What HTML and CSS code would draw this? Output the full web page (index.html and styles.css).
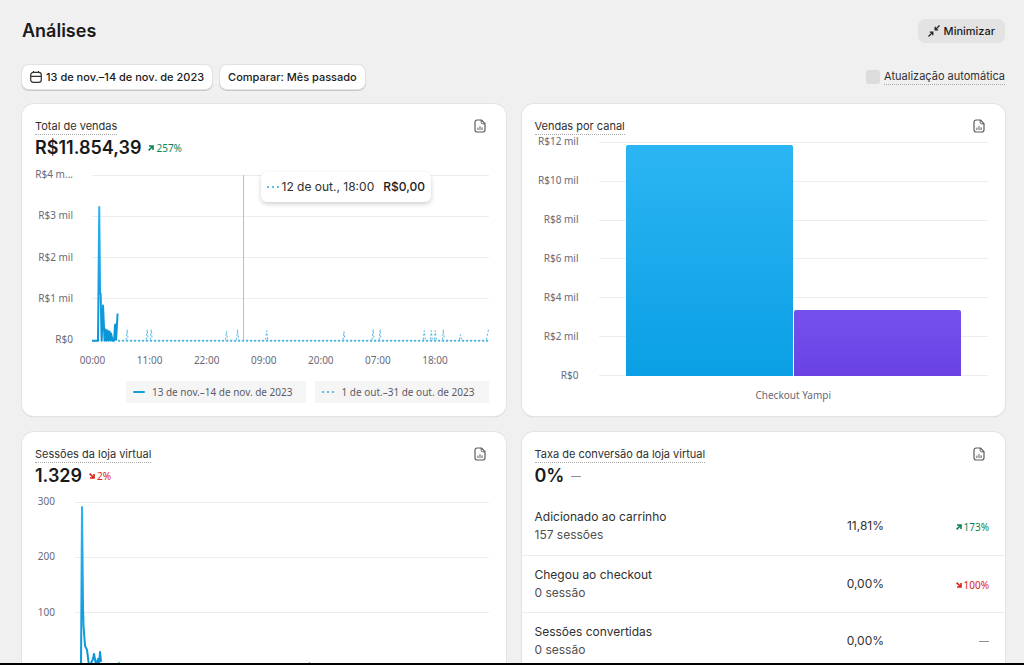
FILE: index.html
```html
<!DOCTYPE html>
<html lang="pt-BR">
<head>
<meta charset="utf-8">
<meta name="viewport" content="width=device-width, initial-scale=1">
<title>Análises</title>
<link rel="stylesheet" href="styles.css">
</head>
<body>
<svg class="defs" aria-hidden="true">
  <defs>
    <linearGradient id="line-blue" x1="0" y1="0" x2="0" y2="1">
      <stop offset="0" stop-color="#2cb3f2"/><stop offset="1" stop-color="#0894d6"/>
    </linearGradient>
    <symbol id="report" viewBox="0 0 12 14">
      <path d="M7.4 1H3.2Q1 1 1 3.2V10.8Q1 13 3.2 13H8.8Q11 13 11 10.8V4.6Z" fill="none" stroke="#5c5c5c" stroke-width="1.2" stroke-linejoin="round"/>
      <path d="M7.2 1V3.4Q7.2 4.8 8.6 4.8H11M3.9 8.6V11M6 7.2V11M8.1 8.4V11" fill="none" stroke="#5c5c5c" stroke-width="1"/>
    </symbol>
    <symbol id="up" viewBox="0 0 6 6">
      <path d="M.6 5.4 4.8 1.2M1 1H5V5" fill="none" stroke="currentColor" stroke-width="1.6"/>
    </symbol>
    <symbol id="down" viewBox="0 0 6 6">
      <path d="M.6.6 4.8 4.8M1 5H5V1" fill="none" stroke="currentColor" stroke-width="1.6"/>
    </symbol>
  </defs>
</svg>
<main class="page">
  <header class="topbar">
    <h1>Análises</h1>
    <button type="button" class="minimize">
      <svg class="icon-min" viewBox="0 0 12 12" aria-hidden="true"><path d="M11.5.5 7.6 4.4M7.2 1.8V4.8H10.2M.5 11.5 4.4 7.6M1.8 7.2H4.8V10.2" fill="none" stroke="#222" stroke-width="1.3"/></svg>
      Minimizar
    </button>
  </header>
  <div class="filters">
    <button type="button" class="filter">
      <svg class="icon-cal" viewBox="0 0 12 12" aria-hidden="true"><rect x=".7" y="1.3" width="10.6" height="10" rx="2.6" fill="none" stroke="#303030" stroke-width="1.2"/><path d="M.7 5.4H11.3M3.5 0V1.8M8.5 0V1.8" stroke="#303030" stroke-width="1.2"/></svg>
      13 de nov.–14 de nov. de 2023
    </button>
    <button type="button" class="filter">Comparar: Mês passado</button>
    <label class="auto"><input type="checkbox"><span class="hint">Atualização automática</span></label>
  </div>

  <div class="cards">
    <section class="card">
      <div class="card-head">
        <h2 class="hint">Total de vendas</h2>
        <button type="button" class="report" aria-label="Ver relatório"><svg viewBox="0 0 12 14"><use href="#report"/></svg></button>
      </div>
      <p class="metric">R$11.854,39 <span class="trend good"><svg><use href="#up"/></svg>257%</span></p>
      <div class="chart sales">
        <div class="ylabels"><span>R$4 m...</span><span>R$3 mil</span><span>R$2 mil</span><span>R$1 mil</span><span>R$0</span></div>
        <div class="plot">
          <div class="grid"><i></i><i></i><i></i><i></i><i></i></div>
          <svg class="lines" viewBox="0 0 395 165" preserveAspectRatio="none" role="img" aria-label="Total de vendas ao longo do tempo">
            <path class="dotted base" d="M26 165H395"/>
            <path class="dotted" d="M34 164l1-10 1 10M54 164l1-10 1 10M58 164l1-10 1 10M133 164l1-8 1 8M144 164l1-10 1 10M173 164l1-9 1 9M250 164l1-8 1 8M279 164l1-10 1 10M286 164l1-10 1 10M330 164l1-9 1 9M337 164l1-9 1 9M341 164l1-9 1 9M349 164l1-10 1 10M366 164l1-5 1 5M393 164l2-10"/>
            <path class="solid" d="M0 165H6L7.2 32 8 118 8.600 118 9.600 165 11 130 12.500 165 13.500 154 14.500 165 15.500 155 16.500 165 17.500 156 18.500 165 19 158 20.500 165 22 165 23 149 24 164 25.500 138"/>
          </svg>
          <div class="cursor"></div>
          <div class="tooltip"><span class="dots"></span><span>12 de out., 18:00</span><strong>R$0,00</strong></div>
        </div>
        <div class="xlabels"><span>00:00</span><span>11:00</span><span>22:00</span><span>09:00</span><span>20:00</span><span>07:00</span><span>18:00</span></div>
      </div>
      <div class="legend">
        <span class="key"><span class="dash"></span>13 de nov.–14 de nov. de 2023</span>
        <span class="key"><span class="dots"></span>1 de out.–31 de out. de 2023</span>
      </div>
    </section>

    <section class="card">
      <div class="card-head">
        <h2 class="hint">Vendas por canal</h2>
        <button type="button" class="report" aria-label="Ver relatório"><svg viewBox="0 0 12 14"><use href="#report"/></svg></button>
      </div>
      <div class="chart channels">
        <div class="ylabels"><span>R$12 mil</span><span>R$10 mil</span><span>R$8 mil</span><span>R$6 mil</span><span>R$4 mil</span><span>R$2 mil</span><span>R$0</span></div>
        <div class="plot">
          <div class="grid"><i></i><i></i><i></i><i></i><i></i><i></i><i></i></div>
          <div class="bars"><div class="bar blue" style="height:98.7%"></div><div class="bar purple" style="height:28%"></div></div>
        </div>
        <div class="category">Checkout Yampi</div>
      </div>
    </section>

    <section class="card">
      <div class="card-head">
        <h2 class="hint">Sessões da loja virtual</h2>
        <button type="button" class="report" aria-label="Ver relatório"><svg viewBox="0 0 12 14"><use href="#report"/></svg></button>
      </div>
      <p class="metric">1.329 <span class="trend bad"><svg><use href="#down"/></svg>2%</span></p>
      <div class="chart sessions">
        <div class="ylabels"><span>300</span><span>200</span><span>100</span><span>0</span></div>
        <div class="plot">
          <div class="grid"><i></i><i></i><i></i><i></i></div>
          <svg class="lines" viewBox="0 0 413 165" preserveAspectRatio="none" role="img" aria-label="Sessões ao longo do tempo">
            <path class="dotted" d="M27 165l8 0 1-5 2 5h5l1-7 1 7H233l1-6 1 6h13l1-5 1 5H413"/>
            <path class="solid" d="M0 165H6L7 5 8 103 8.500 123 10 143 12 147 14 163 16 160 18 156 19 151 21 162 23 156 24 161 25 149 26 159"/>
          </svg>
        </div>
      </div>
    </section>

    <section class="card">
      <div class="card-head">
        <h2 class="hint">Taxa de conversão da loja virtual</h2>
        <button type="button" class="report" aria-label="Ver relatório"><svg viewBox="0 0 12 14"><use href="#report"/></svg></button>
      </div>
      <p class="metric">0% <span class="none"></span></p>
      <table class="funnel">
        <tr><th scope="row">Adicionado ao carrinho<small>157 sessões</small></th><td class="rate">11,81%</td><td class="change"><span class="trend good"><svg><use href="#up"/></svg>173%</span></td></tr>
        <tr><th scope="row">Chegou ao checkout<small>0 sessão</small></th><td class="rate">0,00%</td><td class="change"><span class="trend bad"><svg><use href="#down"/></svg>100%</span></td></tr>
        <tr><th scope="row">Sessões convertidas<small>0 sessão</small></th><td class="rate">0,00%</td><td class="change"><span class="none"></span></td></tr>
      </table>
    </section>
  </div>
</main>
</body>
</html>
```
FILE: styles.css
```css
* { box-sizing: border-box; }
body { margin: 0; background: #f0f0f0; color: #303030; font: 11px/16px Inter, "Liberation Sans", sans-serif; }
button { font: inherit; color: inherit; border: 0; padding: 0; background: none; }
h1, h2, p { margin: 0; }
.defs { position: absolute; width: 0; height: 0; }

.page { height: 100vh; overflow: hidden; padding: 19px 19px 0 22px; border-bottom: 2px solid #000; }
.topbar { display: flex; justify-content: space-between; align-items: center; height: 24px; }
h1 { font-size: 18px; line-height: 24px; font-weight: 600; color: #1a1a1a; }
.minimize { display: flex; align-items: center; gap: 4px; height: 24px; padding: 0 10px; border-radius: 7px; background: #e3e3e3; font-weight: 500; color: #1a1a1a; }
.icon-min, .icon-cal { width: 12px; height: 12px; }
.filters { display: flex; align-items: center; gap: 8px; margin: 22px 0 15px; }
.filter { display: flex; align-items: center; gap: 4px; height: 24px; padding: 0 8px; border-radius: 7px; background: #fff; font-weight: 500; color: #1a1a1a; box-shadow: 0 0 0 1px #e2e2e2, 0 1px 0 1px #c8c8c8; }
.auto { display: flex; align-items: center; gap: 4px; margin-left: auto; }
.auto input { appearance: none; width: 14px; height: 14px; margin: 0; border-radius: 3px; background: #dcdcdc; }
.hint { border-bottom: 1px dotted #aaa; font-size: 11px; line-height: 15px; font-weight: 400; }

.cards { display: grid; grid-template-columns: 1fr 1fr; gap: 16px; }
.card { min-height: 312px; padding: 15px 17px 0 13px; border-radius: 12px; background: #fff; box-shadow: 0 0 0 1px #e4e4e4, 0 1px 1px #bbb; }
.card-head { display: flex; justify-content: space-between; align-items: flex-start; height: 16px; }
.report { display: flex; margin-right: 3px; }
.report svg { width: 12px; height: 14px; }
.metric { display: flex; align-items: center; gap: 7px; height: 24px; margin-top: 1px; font-size: 18px; line-height: 24px; font-weight: 600; color: #1a1a1a; }
.trend { display: inline-flex; align-items: center; gap: 2px; font: 10px/14px "Noto Sans", sans-serif; }
.trend svg { width: 6px; height: 6px; }
.good { color: #0b8457; }
.bad { color: #dc2318; }
.none { display: inline-block; width: 10px; height: 1px; background: #8a9299; vertical-align: middle; }

.chart { display: grid; color: #6a6a78; font: 10px/14px "Noto Sans", sans-serif; }
.ylabels { display: flex; flex-direction: column; justify-content: space-between; margin: -8px 0 -6px; text-align: right; white-space: nowrap; }
.plot { position: relative; display: grid; }
.plot > * { grid-area: 1 / 1; }
.grid { display: flex; flex-direction: column; justify-content: space-between; }
.grid i { height: 1px; background: #ededed; }
.lines { width: 100%; height: 100%; overflow: visible; }
.lines path { fill: none; vector-effect: non-scaling-stroke; stroke-linejoin: round; }
.lines .solid { stroke: url(#line-blue); stroke-width: 2; }
.lines .dotted { stroke: #4db5e3; stroke-width: 1; stroke-dasharray: 2 2; }
.lines .base { stroke-width: 2; }

.sales { grid-template: 165px auto / 38px 1fr; column-gap: 19px; margin-top: 15px; }
.cursor { position: absolute; left: 38%; top: 0; width: 1px; height: 100%; background: #bdbdbd; }
.tooltip { position: absolute; left: 42.5%; top: -3px; display: flex; align-items: center; height: 30px; padding: 0 6px; border-radius: 6px; background: #fff; box-shadow: 0 2px 5px #00000030; color: #303030; font: 12px/16px Inter, sans-serif; white-space: nowrap; }
.tooltip strong { margin-left: 9px; font-weight: 500; color: #1a1a1a; }
.dots { width: 12px; height: 2px; background: repeating-linear-gradient(90deg, #62c0e9 0 2px, transparent 2px 5px); }
.tooltip .dots { margin-right: 3px; }
.dash { width: 12px; height: 2px; border-radius: 1px; background: #14a0df; }
.xlabels { grid-column: 2; display: grid; grid-template-columns: repeat(7, 1fr); margin: 13px 25px 0 -28px; text-align: center; }
.legend { display: flex; justify-content: flex-end; gap: 9px; margin-top: 14px; color: #5c5c68; font: 10px/22px "Noto Sans", sans-serif; }
.key { display: flex; align-items: center; gap: 7px; padding: 0 14px 0 7px; background: #f5f5f5; }

.channels { grid-template: 234px auto / 44px 1fr; column-gap: 20px; margin-top: 7px; }
.bars { display: flex; align-items: flex-end; gap: 1px; padding: 0 7%; }
.bar { flex: 1; border-radius: 2px 2px 0 0; }
.blue { background: linear-gradient(#2cb5f3, #0a9fe4); }
.purple { background: linear-gradient(#7650ed, #6a42e4); }
.category { grid-column: 2; margin-top: 12px; text-align: center; }

.sessions { grid-template: 166px / 20px 1fr; column-gap: 20px; margin-top: 14px; }

.funnel { width: calc(100% + 30px); margin: 10px -17px 0 -13px; border-collapse: collapse; }
.funnel tr { height: 57px; }
.funnel tr + tr { border-top: 1px solid #ebebeb; }
.funnel th { padding: 0 0 0 13px; text-align: left; font-weight: 400; font-size: 12px; line-height: 18px; }
.funnel small { display: block; font-size: 12px; color: #505050; }
.funnel td { padding: 0; text-align: right; }
.rate { width: 120px; font-size: 12px; }
.funnel .change { width: 121px; padding-right: 16px; }
```
